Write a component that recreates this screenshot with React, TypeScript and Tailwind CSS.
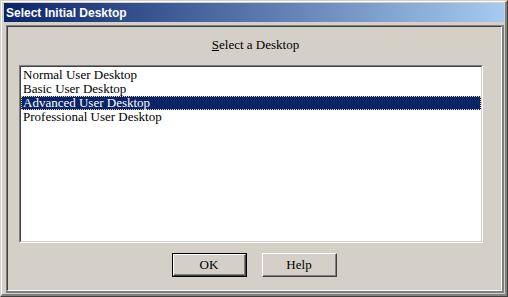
import React from "react";

const serif = { fontFamily: '"Liberation Serif", "Times New Roman", serif' };

function Btn({ label, def }: { label: string; def?: boolean }) {
  const inner = (
    <div className="flex-1 border-t border-l border-t-white border-l-white border-r border-b border-r-[#404040] border-b-[#404040] flex">
      <div className="flex-1 border-r border-b border-r-[#808080] border-b-[#808080] flex items-center justify-center text-[13px] text-black bg-[#d4d0c8]" style={serif}>
        {label}
      </div>
    </div>
  );
  return def ? (
    <div className="w-[75px] h-[24px] border border-black flex">{inner}</div>
  ) : (
    <div className="w-[75px] h-[24px] flex">{inner}</div>
  );
}

export default function App() {
  const items = [
    "Normal User Desktop",
    "Basic User Desktop",
    "Advanced User Desktop",
    "Professional User Desktop",
  ];
  return (
    <div className="w-[508px] h-[297px] bg-[#d4d0c8] overflow-hidden">
      <div className="w-full h-full border-t border-l border-t-[#d4d0c8] border-l-[#d4d0c8] border-r border-b border-r-[#404040] border-b-[#404040] flex flex-col">
        <div className="flex-1 border-t border-l border-t-white border-l-white border-r-2 border-b-2 border-r-[#808080] border-b-[#808080] pt-[1px] pl-[2px] pr-[1px] pb-[1px] flex flex-col">
          <div
            className="h-[19px] flex items-center pl-[2px] text-white font-bold text-[12px] bg-[linear-gradient(to_right,#0a246a,#a6caf0)]"
            style={{ fontFamily: '"Liberation Sans", Arial, sans-serif' }}
          >
            Select Initial Desktop
          </div>
          <div className="flex-1 mt-[3px] ml-[2px] border-t border-l border-t-[#808080] border-l-[#808080] border-r-2 border-b-2 border-r-[#808080] border-b-[#808080] flex flex-col">
            <div className="flex-1 border-t border-l border-t-[#404040] border-l-[#404040] border-r border-b border-r-white border-b-white flex flex-col pt-[10px]">
              <div className="h-[15px] leading-[15px] text-[13px] text-black text-center pl-[2px]" style={serif}>
                <span className="underline">S</span>elect a Desktop
              </div>
              <div className="mt-[13px] ml-[11px] w-[464px] h-[178px] border-t border-l border-t-[#808080] border-l-[#808080] border-r border-b border-r-white border-b-white flex">
                <div className="flex-1 border-t border-l border-t-[#404040] border-l-[#404040] border-r border-b border-r-[#d4d0c8] border-b-[#d4d0c8] bg-white flex flex-col pt-[1px]">
                  {items.map((it, i) => (
                    <div
                      key={it}
                      className={
                        i === 2
                          ? "h-[14px] leading-[12px] pl-[1px] text-[13px] text-white bg-[#0a246a] border border-dotted border-[#e8d48a]"
                          : "h-[14px] leading-[14px] pl-[2px] text-[13px] text-black"
                      }
                      style={serif}
                    >
                      {it}
                    </div>
                  ))}
                </div>
              </div>
              <div className="mt-[10px] ml-[164px] flex gap-[15px]">
                <Btn label="OK" def />
                <Btn label="Help" />
              </div>
            </div>
          </div>
        </div>
      </div>
    </div>
  );
}
